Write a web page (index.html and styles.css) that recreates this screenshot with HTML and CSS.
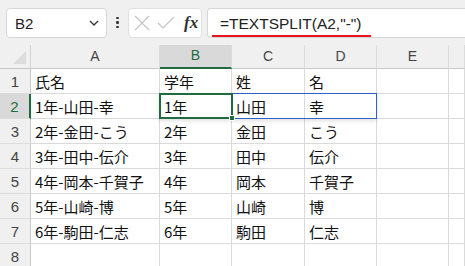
FILE: index.html
```html
<!DOCTYPE html>
<html lang="ja">
<head>
<meta charset="utf-8">
<link rel="stylesheet" href="styles.css">
</head>
<body>
<div class="app">
  <div class="toolbar">
    <div class="namebox">
      <span class="nb-text">B2</span>
      <svg class="chev" width="10" height="6" viewBox="0 0 10 6"><path d="M1 1 L5 5 L9 1" fill="none" stroke="#333" stroke-width="1.3"/></svg>
    </div>
    <div class="dots"><span></span><span></span><span></span></div>
    <div class="fxbox">
      <svg width="18" height="18" viewBox="0 0 18 18"><path d="M2 2 L16 16 M16 2 L2 16" stroke="#c4c4c4" stroke-width="1.2" fill="none"/></svg>
      <svg width="20" height="18" viewBox="0 0 20 18"><path d="M2 9 L7 14 L18 3" stroke="#c4c4c4" stroke-width="1.2" fill="none"/></svg>
      <span class="fx">fx</span>
    </div>
    <div class="formula">
      <span class="ftext">=TEXTSPLIT(A2,"-")</span>
    </div>
  </div>
  <div class="sheet">
    <div class="grid">
      <div class="corner"><div class="tri"></div></div>
      <div class="ch">A</div>
      <div class="ch sel">B</div>
      <div class="ch">C</div>
      <div class="ch">D</div>
      <div class="ch">E</div>
      <div class="ch"></div>

      <div class="rh">1</div><div class="c">氏名</div><div class="c">学年</div><div class="c">姓</div><div class="c">名</div><div class="c"></div><div class="c"></div>
      <div class="rh sel">2</div><div class="c">1年-山田-幸</div><div class="c">1年</div><div class="c">山田</div><div class="c">幸</div><div class="c"></div><div class="c"></div>
      <div class="rh">3</div><div class="c">2年-金田-こう</div><div class="c">2年</div><div class="c">金田</div><div class="c">こう</div><div class="c"></div><div class="c"></div>
      <div class="rh">4</div><div class="c">3年-田中-伝介</div><div class="c">3年</div><div class="c">田中</div><div class="c">伝介</div><div class="c"></div><div class="c"></div>
      <div class="rh">5</div><div class="c">4年-岡本-千賀子</div><div class="c">4年</div><div class="c">岡本</div><div class="c">千賀子</div><div class="c"></div><div class="c"></div>
      <div class="rh">6</div><div class="c">5年-山崎-博</div><div class="c">5年</div><div class="c">山崎</div><div class="c">博</div><div class="c"></div><div class="c"></div>
      <div class="rh">7</div><div class="c">6年-駒田-仁志</div><div class="c">6年</div><div class="c">駒田</div><div class="c">仁志</div><div class="c"></div><div class="c"></div>
      <div class="rh">8</div><div class="c"></div><div class="c"></div><div class="c"></div><div class="c"></div><div class="c"></div><div class="c"></div>
    </div>
    <div class="spill"></div>
    <div class="active"><div class="handle"></div></div>
  </div>
</div>
</body>
</html>
```
FILE: styles.css
```css
* { box-sizing: border-box; }
html, body { margin: 0; padding: 0; }
body {
  width: 465px;
  height: 266px;
  overflow: hidden;
  background: #f0f0f0;
  font-family: "Noto Sans CJK JP", "Noto Sans", sans-serif;
}
.app { display: flex; flex-direction: column; height: 266px; }
.toolbar {
  display: flex;
  align-items: center;
  height: 45px;
  padding: 0 0 0 6px;
  flex: none;
}
.namebox {
  width: 101px;
  height: 30px;
  background: #fff;
  border: 1px solid #d6d6d6;
  border-radius: 4px;
  display: flex;
  align-items: center;
  justify-content: space-between;
  padding: 0 7px 0 8px;
  margin-top: 1px;
}
.nb-text {
  font-family: "Liberation Sans", sans-serif;
  font-size: 15px;
  color: #222;
}
.dots {
  width: 21px;
  display: flex;
  flex-direction: column;
  align-items: center;
  gap: 2px;
}
.dots span { width: 2.5px; height: 2.5px; background: #333; border-radius: 50%; }
.fxbox {
  width: 74px;
  height: 30px;
  margin-top: 1px;
  background: #fff;
  border: 1px solid #e0e0e0;
  border-radius: 4px;
  display: flex;
  align-items: center;
  padding: 0 0 0 4px;
  gap: 5px;
}
.fx {
  font-family: "Liberation Serif", serif;
  font-style: italic;
  font-weight: bold;
  font-size: 17px;
  color: #333;
  margin-left: 3px;
}
.formula {
  flex: 1;
  height: 30px;
  margin-top: 1px;
  margin-left: 5px;
  background: #fff;
  border: 1px solid #d6d6d6;
  border-right: none;
  border-radius: 4px 0 0 4px;
  display: flex;
  align-items: center;
  padding-left: 4px;
}
.ftext {
  font-family: "Liberation Sans", sans-serif;
  font-size: 15.5px;
  color: #222;
  border-bottom: 2px solid #e8151b;
  padding: 0 0 0 8px;
  width: 159px;
  line-height: 22px;
  margin-top: 4px;
}
.sheet { position: relative; flex: 1; overflow: hidden; }
.grid {
  display: grid;
  grid-template-columns: 31px 129px 72px 73px 72px 72px 1fr;
  grid-template-rows: 24px repeat(8, 25px);
}
.corner, .ch, .rh {
  background: #f0f0f0;
  color: #444;
}
.corner { border-right: 1px solid #d4d4d4; border-bottom: 1px solid #c8c8c8; position: relative; }
.tri {
  position: absolute; right: 4px; bottom: 4px;
  width: 0; height: 0;
  border-left: 13px solid transparent;
  border-bottom: 13px solid #dcdcdc;
}
.ch {
  border-right: 1px solid #dcdcdc;
  border-bottom: 1px solid #c8c8c8;
  display: flex; align-items: center; justify-content: center;
  font-family: "Liberation Sans", sans-serif;
  font-size: 14px;
  padding-bottom: 2px;
}
.ch.sel {
  background: #d9d9d9;
  color: #1e6b41;
  border-bottom: 2px solid #1e6b41;
}
.rh {
  border-right: 1px solid #c8c8c8;
  border-bottom: 1px solid #dcdcdc;
  display: flex; align-items: center; justify-content: center;
  font-family: "Liberation Sans", sans-serif;
  font-size: 15px;
}
.rh.sel {
  background: #d9d9d9;
  color: #1e6b41;
  border-right: 2px solid #1e6b41;
}
.c {
  background: #fff;
  border-right: 1px solid #dadada;
  border-bottom: 1px solid #dadada;
  font-size: 15px;
  color: #111;
  padding: 0 0 0 4px;
  display: flex; align-items: center;
  white-space: nowrap;
  overflow: hidden;
}
.spill {
  position: absolute;
  left: 159px; top: 48px;
  width: 218px; height: 26px;
  border: 1px solid #2a62c9;
  box-shadow: 0 2px 4px rgba(0,0,0,0.12);
}
.active {
  position: absolute;
  left: 159px; top: 48px;
  width: 74px; height: 26px;
  border: 2px solid #1e6b41;
}
.handle {
  position: absolute;
  right: -4px; bottom: -4px;
  width: 6px; height: 6px;
  background: #1e6b41;
  border: 1px solid #fff;
}
```
